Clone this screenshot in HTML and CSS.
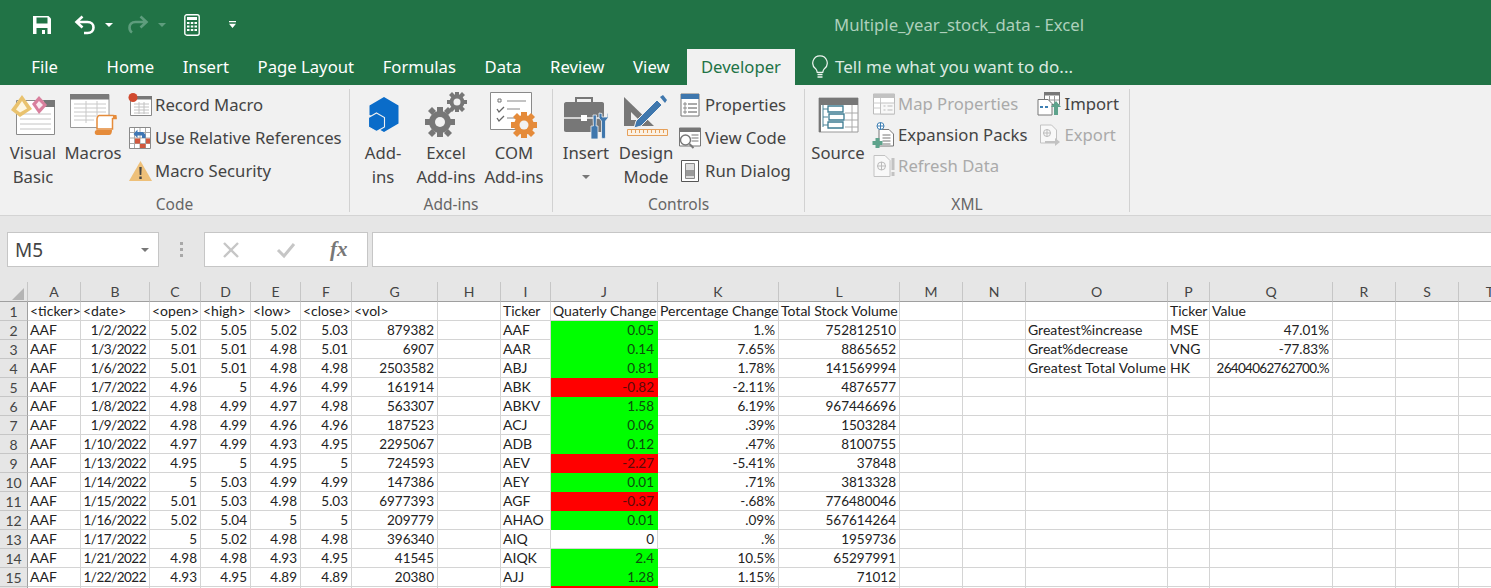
FILE: index.html
```html
<!DOCTYPE html>
<html lang="en">
<head>
<meta charset="utf-8">
<title>Multiple_year_stock_data - Excel</title>
<link rel="stylesheet" href="styles.css">
</head>
<body>
<header class="titlebar">
  <div class="qat">
    <svg class="q-save" width="20" height="20" viewBox="0 0 20 20"><path d="M1 1h15.500L19 3.500V19H1z" fill="#fff"/><path d="M4.500 2.500h11v6h-11z" fill="#217346"/><path d="M4.500 13h11v6h-2.500v-4h-3v4H4.500z" fill="#217346"/></svg>
    <svg class="q-undo" width="22" height="20" viewBox="0 0 22 20"><path d="M8.500 1.500 2.500 7l6 5.500M3 7h10.500c4 0 6 2.600 6 5.500s-2 5.500-6 5.500h-3.500" fill="none" stroke="#fff" stroke-width="2.600"/></svg>
    <span class="caret"></span>
    <svg class="q-redo" width="22" height="20" viewBox="0 0 22 20"><path d="m13.500 1.500 6 5.500-6 5.500M19 7H8.500c-4 0-6 2.600-6 5.500 0 2 1 4 2.500 5" fill="none" stroke="#5e9d7d" stroke-width="2.600"/></svg>
    <span class="caret dim"></span>
    <svg class="q-calc" width="16" height="22" viewBox="0 0 16 22"><rect x=".8" y=".8" width="14.400" height="20.400" rx="2" fill="none" stroke="#fff" stroke-width="1.400"/><path d="M3 3h10v3H3zM3 8h2.500v2H3zM6.800 8h2.500v2H6.800zM10.500 8H13v2h-2.500zM3 11.500h2.500v2H3zM6.800 11.500h2.500v2H6.800zM10.500 11.500H13v2h-2.500zM3 15h2.500v2H3zM6.800 15h2.500v2H6.800zM10.500 15H13v2h-2.500z" fill="#fff"/></svg>
    <svg class="q-more" width="7" height="7" viewBox="0 0 7 7"><path d="M0 0h7v1.300H0zM0 2.800h7L3.500 7z" fill="#fff"/></svg>
  </div>
  <div class="doc-title">Multiple_year_stock_data - Excel</div>
</header>

<nav class="tabs">
  <span class="tab tab-file">File</span>
  <span class="tab">Home</span>
  <span class="tab">Insert</span>
  <span class="tab">Page Layout</span>
  <span class="tab">Formulas</span>
  <span class="tab">Data</span>
  <span class="tab">Review</span>
  <span class="tab">View</span>
  <span class="tab tab-active">Developer</span>
  <span class="tell">
    <svg width="16" height="23" viewBox="0 0 16 23"><path d="M8 .8a7.200 7.200 0 0 0-4.400 12.900c1 1 1.400 2 1.600 3.600h5.600c.2-1.600.6-2.600 1.600-3.600A7.200 7.200 0 0 0 8 .8z" fill="none" stroke="#eef5f1" stroke-width="1.200"/><path d="M5.500 19.500h5M5.500 22h5" stroke="#eef5f1" stroke-width="1.400"/></svg>
    <span>Tell me what you want to do...</span>
  </span>
</nav>

<section class="ribbon">
  <div class="group g-code">
    <div class="g-body">
      <div class="big b-vb">
        <svg width="44" height="40" viewBox="0 0 44 40"><path d="M5.500 5.500h38v34h-38z" fill="#fff" stroke="#8b8b8b"/><path d="M33 5h11v7H33z" fill="#777"/><path d="M9 19h31M9 24h31M9 29h31M9 34h31" stroke="#c4c4c4"/><path d="M0 15 11 0l10 14-12 8z" fill="#e9c26e"/><path d="M5 14.500 11 6l5 7.500-7 4z" fill="#fdf6e2"/><path d="m21 9 7-8 8 9-8 9z" fill="#d97f9d"/><path d="m25 9.500 3-3.500 4 4-4 4z" fill="#fbeaf0"/></svg>
        <span>Visual<br>Basic</span>
      </div>
      <div class="big b-mac">
        <svg width="47" height="42" viewBox="0 0 47 42"><path d="M.5.500h38.500v33H.5z" fill="#fff" stroke="#9a9a9a"/><path d="M0 0h39v5.500H0z" fill="#7b7b7b"/><path d="M4 10h32M4 14h32M4 18h32M4 22h24M4 26h20M16 7v22M27 7v14" stroke="#c8c8c8"/><path d="M29 21.500h14c1.500 0 3 1 3 3h-3.500V35H27V25c0-1 1-3.500 2-3.500z" fill="#fff" stroke="#e58b3a" stroke-width="1.500"/><path d="M27 36h15c0 3-1 5-3 5H27c-3 0-3-5 0-5zM43 21h3.500v4H43z" fill="#e58b3a"/></svg>
        <span>Macros</span>
      </div>
      <div class="small-col">
        <div class="small">
          <svg width="25" height="24" viewBox="0 0 25 24"><path d="M2.500 3.500h21v19h-21z" fill="#fff" stroke="#8a8a8a"/><path d="M3 3h21v3.500H3z" fill="#777"/><path d="M6 11h15M6 14h15M6 17h15M6 20h15M11 9v12M16 9v12" stroke="#c2c2c2"/><circle cx="5" cy="4.500" r="4.500" fill="#d1492e"/></svg>
          <span>Record Macro</span>
        </div>
        <div class="small">
          <svg width="25" height="24" viewBox="0 0 25 24"><path d="M1.500 1.500h21v21h-21z" fill="#fff" stroke="#8a8a8a"/><path d="M6.500 2v20M12 2v20M17.500 2v20M2 6.500h20M2 12h20M2 17.500h20" stroke="#a9a9a9"/><path d="M7 12.500h5v5H7zM18 12.500h4v5h-4zM12 18h5.500v4H12z" fill="#d2583d"/><path d="M9.500 6h5.500l2.500 2.500V12h-3.500V9.500h-4.500V12L5.500 8l4-4.500z" fill="#3e76b4"/></svg>
          <span>Use Relative References</span>
        </div>
        <div class="small">
          <svg width="25" height="22" viewBox="0 0 25 22"><path d="M12.500 1 24 21H1z" fill="#eec079"/><path d="M11.300 7h2.400l-.4 8h-1.600zM11.300 16.500h2.400V19h-2.400z" fill="#444"/></svg>
          <span>Macro Security</span>
        </div>
      </div>
    </div>
    <div class="g-label">Code</div>
  </div>

  <div class="group g-addins">
    <div class="g-body">
      <div class="big b-add">
        <svg width="32" height="36" viewBox="0 0 32 36"><path d="M17 0 31.500 8.500v18L17 35 8 30V20L2.500 18V8.500z" fill="#0a6cc9"/><path d="m9.500 16 8 4.500v9.500l-8 4.500-8-4.500v-9.500z" fill="#0a6cc9" stroke="#f1f1f1" stroke-width="1.100"/></svg>
        <span>Add-<br>ins</span>
      </div>
      <div class="big b-exc">
        <svg width="42" height="46" viewBox="0 0 42 46"><g fill="#777"><circle cx="15" cy="30" r="11"/><path d="M12 15h6v5h-6zM12 40h6v5h-6zM0 27h5v6H0zM25 27h5v6h-5zM3 19l4-4 4 4-4 4zM19 19l4-4 4 4-4 4zM3 41l4 4 4-4-4-4zM19 41l4 4 4-4-4-4z"/><circle cx="32" cy="10" r="7.500"/><path d="M30 0h4v4h-4zM30 16h4v4h-4zM22 8h4v4h-4zM38 8h4v4h-4zM24 3l3-3 3 3-3 3zM34 3l3-3 3 3-3 3zM24 17l3 3 3-3-3-3zM34 17l3 3 3-3-3-3z"/></g><circle cx="15" cy="30" r="5" fill="#f1f1f1"/><circle cx="32" cy="10" r="3.500" fill="#f1f1f1"/></svg>
        <span>Excel<br>Add-ins</span>
      </div>
      <div class="big b-com">
        <svg width="48" height="47" viewBox="0 0 48 47"><path d="M.5.500h41v37H.5z" fill="#fff" stroke="#8a8a8a"/><path d="M8 7h3v3H8z" fill="none" stroke="#777"/><path d="M17 9h19M17 17h13M17 26h8" stroke="#888" stroke-width="1.200"/><path d="m7 17 2 3 5-5M7 26l2 3 5-5" fill="none" stroke="#666" stroke-width="1.300"/><g fill="#e58b3a"><circle cx="34" cy="33" r="10"/><path d="M31 20h6v5h-6zM31 41h6v5h-6zM21 30h5v6h-5zM42 30h5v6h-5zM23 25l4-4 4 4-4 4zM37 25l4-4 4 4-4 4zM23 41l4 4 4-4-4-4zM37 41l4 4 4-4-4-4z"/></g><circle cx="34" cy="33" r="4.500" fill="#f1f1f1"/></svg>
        <span>COM<br>Add-ins</span>
      </div>
    </div>
    <div class="g-label">Add-ins</div>
  </div>

  <div class="group g-ctrl">
    <div class="g-body">
      <div class="big b-ins">
        <svg width="46" height="43" viewBox="0 0 46 43"><path d="M13 7V2h16v5" fill="none" stroke="#777" stroke-width="2"/><path d="M3 6h36c1.500 0 2 1 2 2v26c0 1-1 2-2 2H3c-1.500 0-2-1-2-2V8c0-1 1-2 2-2z" fill="#777"/><path d="M1 22h40" stroke="#f1f1f1" stroke-width="1.300"/><path d="M18 19h6v6h-6z" fill="#fff"/><path d="M30 19h3.500l-.4 11H35v13h-7V30h2.400z" fill="#3f77ad" stroke="#f1f1f1" stroke-width=".8"/><path d="M36 17v5l2.500 3v16c0 2 4 2 4 0V25l2.500-3v-5l-1 .5v3.500h-5v-3.500z" fill="#3f77ad" stroke="#f1f1f1" stroke-width=".8"/></svg>
        <span>Insert</span>
        <i class="caret-dark"></i>
      </div>
      <div class="big b-des">
        <svg width="44" height="41" viewBox="0 0 44 41"><path d="M0 2v29h30z" fill="#777"/><path d="M7 17v8h8z" fill="#f1f1f1"/><path d="M12 26 33 5l5 5-21 21-7 2z" fill="#3f77ad" stroke="#f1f1f1"/><path d="m36 2 3-2 4 5-2 3z" fill="#3f77ad"/><path d="M3.500 34.500h40v6h-40z" fill="#fbf1e4" stroke="#e6a05a"/><path d="M7.500 35v3M11.500 35v3M15.500 35v3M19.500 35v3M23.500 35v3M27.500 35v3M31.500 35v3M35.500 35v3M39.500 35v3" stroke="#e6a05a"/></svg>
        <span>Design<br>Mode</span>
      </div>
      <div class="small-col">
        <div class="small">
          <svg width="24" height="24" viewBox="0 0 20 24"><path d="M1 1h18v22H1z" fill="#fff" stroke="#777"/><path d="M1 1h18v5H1z" fill="#3f77ad"/><path d="M4 10h2v2H4zM4 14h2v2H4zM4 18h2v2H4z" fill="none" stroke="#777" stroke-width=".8"/><path d="M8 11h9M8 15h9M8 19h9" stroke="#555"/></svg>
          <span>Properties</span>
        </div>
        <div class="small">
          <svg width="24" height="22" viewBox="0 0 23 22"><path d="M1 1h21v18H1z" fill="#fff" stroke="#777"/><path d="M1 1h21v4H1z" fill="#777"/><path d="M13 8h7M13 11h7M13 14h7" stroke="#777"/><circle cx="7" cy="13" r="5" fill="#fff" stroke="#777" stroke-width="1.400"/><path d="m11 17 4 4" stroke="#777" stroke-width="2"/></svg>
          <span>View Code</span>
        </div>
        <div class="small">
          <svg width="24" height="22" viewBox="0 0 18 22"><path d="M.5.500h17v21H.5z" fill="#fff" stroke="#555"/><path d="M4.500 3.500h9v15h-9z" fill="#ddd" stroke="#888"/><path d="M5 10h8v6H5z" fill="#999"/></svg>
          <span>Run Dialog</span>
        </div>
      </div>
    </div>
    <div class="g-label">Controls</div>
  </div>

  <div class="group g-xml">
    <div class="g-body">
      <div class="big b-src">
        <svg width="41" height="36" viewBox="0 0 41 36"><path d="M1 1h39v34H1z" fill="#fff" stroke="#999"/><path d="M1 1h39v7H1z" fill="#777"/><path d="M1 1h2v34H1z" fill="#777"/><path d="M27 16h13M27 23h13M27 30h13M34 8v27" stroke="#aaa"/><path d="M5 8v22M5 12h5M5 20h5M5 28h5" stroke="#4a8296" fill="none"/><path d="M10 9h15v6H10zM11 17h15v6H11zM10 25h15v6H10z" fill="#fff" stroke="#3e7c92" stroke-width="1.300"/></svg>
        <span>Source</span>
      </div>
      <div class="xml-col">
        <div class="small off">
          <svg width="24" height="22" viewBox="0 0 23 22"><path d="M1 1h21v20H1z" fill="#fff" stroke="#bbb"/><path d="M1 1h21v4H1z" fill="#c2c2c2"/><path d="M8 5v16M1 10h7M1 15h7" stroke="#ccc"/><path d="M8 10h14v11H8z" fill="#f8f8f8" stroke="#c2c2c2"/><path d="M11 13h2M11 17h2M15 13h5M15 17h5" stroke="#bbb"/></svg>
          <span>Map Properties</span>
        </div>
        <div class="small">
          <svg width="24" height="26" viewBox="0 0 23 26"><path d="M6.500 7.500h10l4.500 4.500v12H6.500z" fill="#fff" stroke="#777"/><path d="M10 13h8M10 16h8M10 19h8M10 22h8" stroke="#777"/><circle cx="8" cy="4" r="3.500" fill="#fff" stroke="#3e7fb3"/><path d="M4.500 4h7M8 .5v7" stroke="#3e7fb3"/><path d="M3 16h4v3h3v4H7v3H3v-3H0v-4h3z" fill="#5ea38c"/></svg>
          <span>Expansion Packs</span>
        </div>
        <div class="small off">
          <svg width="24" height="24" viewBox="0 0 23 24"><path d="M1.500 1.500h11l5 5v16h-16z" fill="#f8f8f8" stroke="#c2c2c2"/><circle cx="9" cy="12" r="4" fill="none" stroke="#bbb"/><path d="M5 12h8M9 8v8" stroke="#bbb"/><path d="M19 4h3v12h-3zM19 18h3v4h-3z" fill="#c2c2c2"/></svg>
          <span>Refresh Data</span>
        </div>
      </div>
      <div class="xml-col2">
        <div class="small">
          <svg width="24" height="24" viewBox="0 0 24 24"><path d="M7.500.5h15v12h-15z" fill="#fff" stroke="#777"/><path d="M7 0h16v3.500H7z" fill="#777"/><path d="M12.500 4v9M17.500 4v9M7 8h15" stroke="#999"/><path d="M1 7.500h10l4 4V23H1z" fill="#fff" stroke="#777"/><path d="M3 15h3M8 15h3" stroke="#3e7fb3" stroke-width="2"/><path d="m19 9 5 6h-3v8h-4v-8h-3z" fill="#5ea38c"/></svg>
          <span>Import</span>
        </div>
        <div class="small off">
          <svg width="24" height="22" viewBox="0 0 24 22"><path d="M3.500 1h11l5 5v13h-16z" fill="#f8f8f8" stroke="#c2c2c2"/><circle cx="10" cy="9" r="3.500" fill="none" stroke="#bbb"/><path d="M6.500 9h7M10 5.500v7" stroke="#bbb"/><path d="M8 17h10v-3l5 4-5 4v-3H8z" fill="#c2c2c2"/></svg>
          <span>Export</span>
        </div>
      </div>
    </div>
    <div class="g-label">XML</div>
  </div>
</section>

<section class="formula">
  <div class="namebox"><span>M5</span><i class="caret-dark"></i></div>
  <div class="dots"><i></i><i></i><i></i></div>
  <div class="fbtns">
    <svg width="18" height="18" viewBox="0 0 18 18"><path d="m2 2 14 14M16 2 2 16" stroke="#c6c6c6" stroke-width="2.400"/></svg>
    <svg width="20" height="18" viewBox="0 0 20 18"><path d="m2 9 6 6L18 3" fill="none" stroke="#c6c6c6" stroke-width="3"/></svg>
    <span class="fx">fx</span>
  </div>
  <div class="finput"></div>
</section>

<table class="sheet">
  <colgroup>
    <col class="c-rh"><col class="c-a"><col class="c-b"><col class="c-c"><col class="c-d"><col class="c-e"><col class="c-f"><col class="c-g"><col class="c-h"><col class="c-i"><col class="c-j"><col class="c-k"><col class="c-l"><col class="c-m"><col class="c-n"><col class="c-o"><col class="c-p"><col class="c-q"><col class="c-r"><col class="c-s"><col class="c-t">
  </colgroup>
  <thead>
    <tr><th class="corner"><svg width="12" height="12" viewBox="0 0 12 12"><path d="M12 0v12H0z" fill="#b4b4b4"/></svg></th><th>A</th><th>B</th><th>C</th><th>D</th><th>E</th><th>F</th><th>G</th><th>H</th><th>I</th><th>J</th><th>K</th><th>L</th><th>M</th><th>N</th><th>O</th><th>P</th><th>Q</th><th>R</th><th>S</th><th>T</th></tr>
  </thead>
  <tbody>
    <tr><th>1</th><td>&lt;ticker&gt;</td><td>&lt;date&gt;</td><td>&lt;open&gt;</td><td>&lt;high&gt;</td><td>&lt;low&gt;</td><td>&lt;close&gt;</td><td>&lt;vol&gt;</td><td></td><td>Ticker</td><td>Quaterly Change</td><td>Percentage Change</td><td>Total Stock Volume</td><td></td><td></td><td></td><td>Ticker</td><td>Value</td><td></td><td></td><td></td></tr>
    <tr><th>2</th><td>AAF</td><td class="n d">1/2/2022</td><td class="n">5.02</td><td class="n">5.05</td><td class="n">5.02</td><td class="n">5.03</td><td class="n">879382</td><td></td><td>AAF</td><td class="n up">0.05</td><td class="n">1.%</td><td class="n">752812510</td><td></td><td></td><td>Greatest%increase</td><td>MSE</td><td class="n">47.01%</td><td></td><td></td><td></td></tr>
    <tr><th>3</th><td>AAF</td><td class="n d">1/3/2022</td><td class="n">5.01</td><td class="n">5.01</td><td class="n">4.98</td><td class="n">5.01</td><td class="n">6907</td><td></td><td>AAR</td><td class="n up">0.14</td><td class="n">7.65%</td><td class="n">8865652</td><td></td><td></td><td>Great%decrease</td><td>VNG</td><td class="n">-77.83%</td><td></td><td></td><td></td></tr>
    <tr><th>4</th><td>AAF</td><td class="n d">1/6/2022</td><td class="n">5.01</td><td class="n">5.01</td><td class="n">4.98</td><td class="n">4.98</td><td class="n">2503582</td><td></td><td>ABJ</td><td class="n up">0.81</td><td class="n">1.78%</td><td class="n">141569994</td><td></td><td></td><td class="wide">Greatest Total Volume</td><td>HK</td><td class="n tight">26404062762700.%</td><td></td><td></td><td></td></tr>
    <tr><th>5</th><td>AAF</td><td class="n d">1/7/2022</td><td class="n">4.96</td><td class="n">5</td><td class="n">4.96</td><td class="n">4.99</td><td class="n">161914</td><td></td><td>ABK</td><td class="n down">-0.82</td><td class="n">-2.11%</td><td class="n">4876577</td><td></td><td></td><td></td><td></td><td></td><td></td><td></td><td></td></tr>
    <tr><th>6</th><td>AAF</td><td class="n d">1/8/2022</td><td class="n">4.98</td><td class="n">4.99</td><td class="n">4.97</td><td class="n">4.98</td><td class="n">563307</td><td></td><td>ABKV</td><td class="n up">1.58</td><td class="n">6.19%</td><td class="n">967446696</td><td></td><td></td><td></td><td></td><td></td><td></td><td></td><td></td></tr>
    <tr><th>7</th><td>AAF</td><td class="n d">1/9/2022</td><td class="n">4.98</td><td class="n">4.99</td><td class="n">4.96</td><td class="n">4.96</td><td class="n">187523</td><td></td><td>ACJ</td><td class="n up">0.06</td><td class="n">.39%</td><td class="n">1503284</td><td></td><td></td><td></td><td></td><td></td><td></td><td></td><td></td></tr>
    <tr><th>8</th><td>AAF</td><td class="n d">1/10/2022</td><td class="n">4.97</td><td class="n">4.99</td><td class="n">4.93</td><td class="n">4.95</td><td class="n">2295067</td><td></td><td>ADB</td><td class="n up">0.12</td><td class="n">.47%</td><td class="n">8100755</td><td></td><td></td><td></td><td></td><td></td><td></td><td></td><td></td></tr>
    <tr><th>9</th><td>AAF</td><td class="n d">1/13/2022</td><td class="n">4.95</td><td class="n">5</td><td class="n">4.95</td><td class="n">5</td><td class="n">724593</td><td></td><td>AEV</td><td class="n down">-2.27</td><td class="n">-5.41%</td><td class="n">37848</td><td></td><td></td><td></td><td></td><td></td><td></td><td></td><td></td></tr>
    <tr><th>10</th><td>AAF</td><td class="n d">1/14/2022</td><td class="n">5</td><td class="n">5.03</td><td class="n">4.99</td><td class="n">4.99</td><td class="n">147386</td><td></td><td>AEY</td><td class="n up">0.01</td><td class="n">.71%</td><td class="n">3813328</td><td></td><td></td><td></td><td></td><td></td><td></td><td></td><td></td></tr>
    <tr><th>11</th><td>AAF</td><td class="n d">1/15/2022</td><td class="n">5.01</td><td class="n">5.03</td><td class="n">4.98</td><td class="n">5.03</td><td class="n">6977393</td><td></td><td>AGF</td><td class="n down">-0.37</td><td class="n">-.68%</td><td class="n">776480046</td><td></td><td></td><td></td><td></td><td></td><td></td><td></td><td></td></tr>
    <tr><th>12</th><td>AAF</td><td class="n d">1/16/2022</td><td class="n">5.02</td><td class="n">5.04</td><td class="n">5</td><td class="n">5</td><td class="n">209779</td><td></td><td>AHAO</td><td class="n up">0.01</td><td class="n">.09%</td><td class="n">567614264</td><td></td><td></td><td></td><td></td><td></td><td></td><td></td><td></td></tr>
    <tr><th>13</th><td>AAF</td><td class="n d">1/17/2022</td><td class="n">5</td><td class="n">5.02</td><td class="n">4.98</td><td class="n">4.98</td><td class="n">396340</td><td></td><td>AIQ</td><td class="n">0</td><td class="n">.%</td><td class="n">1959736</td><td></td><td></td><td></td><td></td><td></td><td></td><td></td><td></td></tr>
    <tr><th>14</th><td>AAF</td><td class="n d">1/21/2022</td><td class="n">4.98</td><td class="n">4.98</td><td class="n">4.93</td><td class="n">4.95</td><td class="n">41545</td><td></td><td>AIQK</td><td class="n up">2.4</td><td class="n">10.5%</td><td class="n">65297991</td><td></td><td></td><td></td><td></td><td></td><td></td><td></td><td></td></tr>
    <tr><th>15</th><td>AAF</td><td class="n d">1/22/2022</td><td class="n">4.93</td><td class="n">4.95</td><td class="n">4.89</td><td class="n">4.89</td><td class="n">20380</td><td></td><td>AJJ</td><td class="n up">1.28</td><td class="n">1.15%</td><td class="n">71012</td><td></td><td></td><td></td><td></td><td></td><td></td><td></td><td></td></tr>
    <tr><th></th><td></td><td></td><td></td><td></td><td></td><td></td><td></td><td></td><td></td><td class="down cut"></td><td></td><td></td><td></td><td></td><td></td><td></td><td></td><td></td><td></td><td></td></tr>
  </tbody>
</table>
</body>
</html>
```
FILE: styles.css
```css
* { box-sizing: border-box; }
html, body { margin: 0; height: 588px; overflow: hidden; }
body { width: 1491px; background: #e6e6e6; font-family: "Noto Sans", "Open Sans", sans-serif; color: #444; }

.titlebar { height: 49px; background: #217346; display: flex; align-items: center; }
.qat { width: 834px; display: flex; align-items: center; padding-left: 32px; flex: none; }
.q-undo { margin-left: 22px; }
.caret { width: 0; height: 0; border: 4px solid transparent; border-top: 4px solid #fff; border-bottom: 0; margin-left: 9px; margin-right: 14px; }
.caret.dim { border-top-color: #5e9d7d; margin-right: 18px; }
.q-more { margin-left: 29px; }
.doc-title { color: #aed0bc; font-size: 16.700px; }

.tabs { height: 36px; background: #217346; display: flex; align-items: center; padding-left: 17px; color: #fff; font-size: 16.700px; }
.tab { padding: 0 14.300px; height: 36px; line-height: 35px; flex: none; }
.tab-file { margin-right: 20px; }
.tab-active { background: #f1f1f1; color: #217346; margin-left: 3px; padding: 0 14px; }
.tell { display: flex; align-items: center; gap: 7px; margin-left: 17px; margin-bottom: 2px; color: #dbe9e1; font-size: 17px; }

.ribbon { height: 131px; background: #f1f1f1; display: flex; border-bottom: 1px solid #d4d4d4; color: #444; font-size: 16.700px; line-height: 24px; }
.group { height: 123px; display: flex; flex-direction: column; border-right: 1px solid #d2d2d2; margin-top: 4px; flex: none; }
.g-body { flex: 1; display: flex; min-height: 0; }
.g-label { height: 22px; padding-top: 6px; text-align: center; font-size: 15.500px; line-height: 16px; color: #666; }
.g-code { width: 350px; }
.g-addins { width: 203px; }
.g-ctrl { width: 252px; }
.g-xml { width: 325px; }

.big { display: grid; grid-template-rows: 52px auto auto; justify-items: center; align-items: center; text-align: center; flex: none; align-content: start; }
.big span { display: block; }
.b-vb { width: 56px; margin-left: 5px; }
.b-mac { width: 60px; margin-left: 2px; }
.small-col { display: flex; flex-direction: column; gap: 9px; margin-left: 5px; padding-top: 4px; }
.small { display: flex; align-items: center; gap: 2px; height: 24px; white-space: nowrap; }
.small svg { flex: none; }
.off { color: #aaa; }

.b-add { width: 56px; margin-left: 5px; }
.b-exc { width: 68px; margin-left: 1px; }
.b-com { width: 68px; }
.b-ins { width: 58px; margin-left: 4px; }
.b-ins svg { margin-top: 4px; }
.caret-dark { width: 0; height: 0; border: 4px solid transparent; border-top: 4px solid #777; border-bottom: 0; }
.b-ins .caret-dark { margin-top: 10px; }
.b-des { width: 62px; }
.g-ctrl .small-col { margin-left: 1px; }
.g-ctrl .small { gap: 3px; }

.b-src { width: 60px; margin-left: 3px; }
.xml-col { display: flex; flex-direction: column; gap: 7px; margin-left: 4px; padding-top: 3px; }
.xml-col2 { display: flex; flex-direction: column; gap: 7px; margin-left: 10px; padding-top: 3px; }
.xml-col2 .small { gap: 3px; }

.formula { height: 66px; background: #e6e6e6; display: flex; align-items: flex-start; padding: 16px 0 0 7px; }
.namebox { width: 152px; height: 35px; background: #fff; border: 1px solid #c6c6c6; display: flex; align-items: center; justify-content: space-between; padding: 0 9px 0 7px; font-size: 19px; color: #444; }
.dots { width: 45px; height: 35px; display: flex; flex-direction: column; align-items: center; justify-content: center; gap: 3px; }
.dots i { width: 3px; height: 3px; background: #a8a8a8; }
.fbtns { width: 164px; height: 35px; background: #fff; border: 1px solid #c6c6c6; display: flex; align-items: center; padding-left: 17px; gap: 36px; flex: none; }
.fx { font: italic bold 21px "Liberation Serif", serif; color: #777; margin-left: -2px; }
.finput { flex: 1; height: 35px; margin-left: 4px; background: #fff; border: 1px solid #c6c6c6; border-right: 0; }

.sheet { table-layout: fixed; border-collapse: separate; border-spacing: 0; width: 1516px; font-family: Lato, "Noto Sans", sans-serif; font-size: 14px; color: #222; background: #fff; }
.c-rh { width: 28px; }
.c-a { width: 53px; }
.c-b { width: 69px; }
.c-c { width: 51px; }
.c-d { width: 50px; }
.c-e { width: 50px; }
.c-f { width: 51px; }
.c-g { width: 86px; }
.c-h { width: 63px; }
.c-i { width: 50px; }
.c-j { width: 107px; }
.c-k { width: 121px; }
.c-l { width: 121px; }
.c-m { width: 63px; }
.c-n { width: 63px; }
.c-o { width: 142px; }
.c-p { width: 42px; }
.c-q { width: 123px; }
.c-r { width: 63px; }
.c-s { width: 63px; }
.c-t { width: 63px; }
.sheet th { background: #e6e6e6; font-weight: 400; color: #444; padding: 0; text-align: center; }
.sheet thead th { height: 20px; font-size: 14px; border-right: 1px solid #c6c6c6; border-bottom: 1px solid #9f9f9f; line-height: 19px; }
.sheet tbody th { border-right: 1px solid #9f9f9f; border-bottom: 1px solid #c6c6c6; font-size: 14px; }
.corner svg { display: block; margin: 5px 0 0 12px; }
.sheet td { height: 19px; padding: 0 2px 0 2px; border-right: 1px solid #d4d4d4; border-bottom: 1px solid #d4d4d4; white-space: nowrap; overflow: visible; line-height: 18px; }
.sheet td.n { text-align: right; padding-right: 3px; font-size: 13.500px; }
.sheet td.d { letter-spacing: -.5px; }
.sheet td.tight { letter-spacing: -.7px; }
.sheet td.wide { letter-spacing: .15px; }
.sheet td.up { background: #00ff00; color: #0c4c0c; border-color: #00ff00; }
.sheet td.down { background: #ff0000; color: #5a0a0a; border-color: #ff0000; }
.sheet td.cut { box-shadow: 0 -1px 0 #ff0000; }
```
